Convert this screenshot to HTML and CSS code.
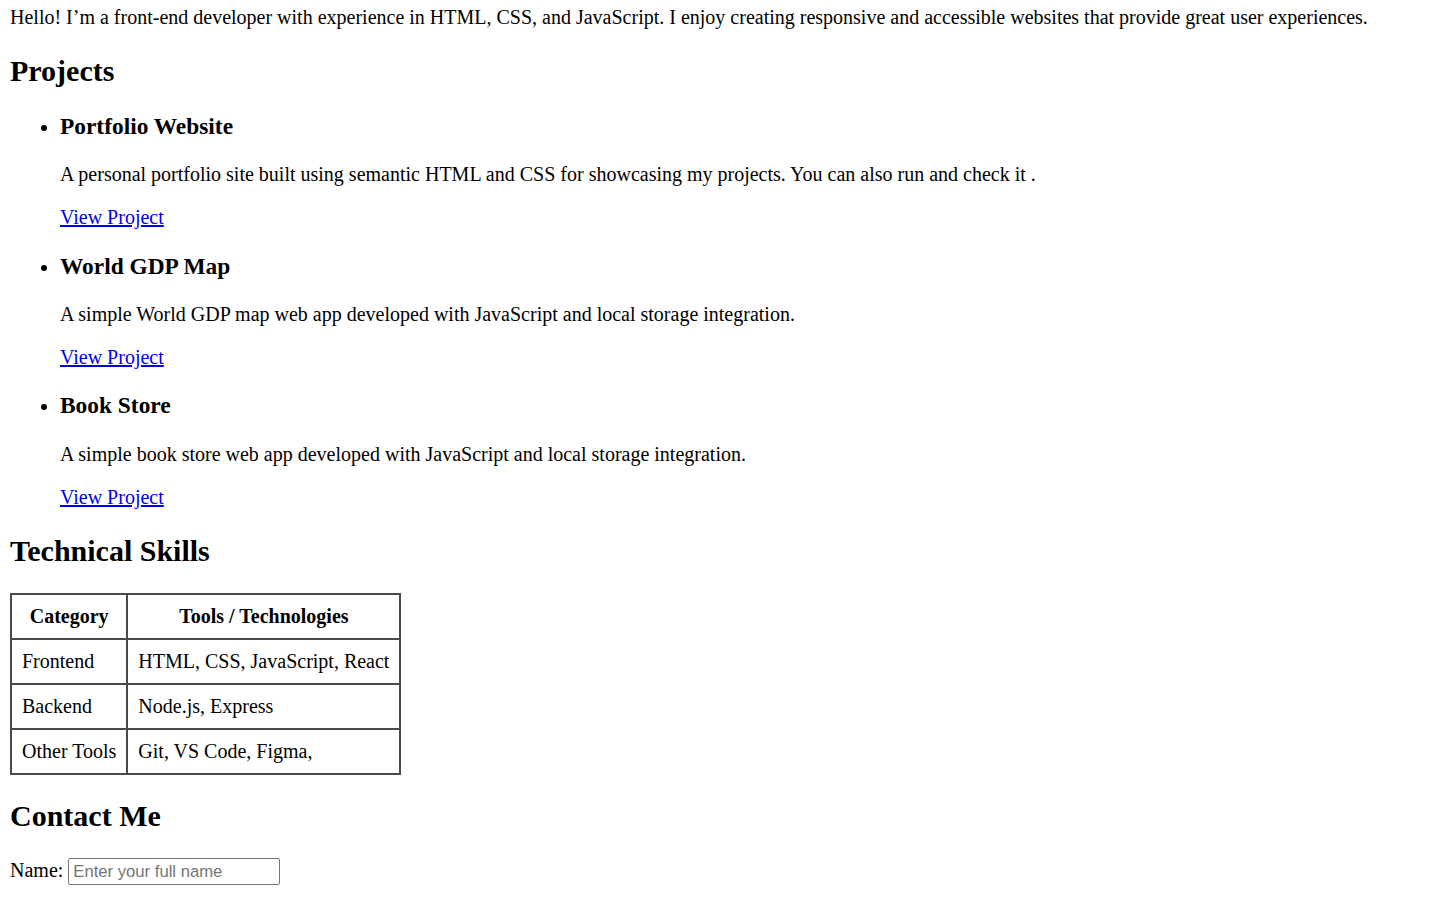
FILE: index.html
```html
<!DOCTYPE html>
<html lang="en">
<head>
<meta charset="utf-8">
<title>Portfolio</title>
<link rel="stylesheet" href="styles.css">
</head>
<body>
<p class="intro">Hello! I’m a front-end developer with experience in HTML, CSS, and JavaScript. I enjoy creating responsive and accessible websites that provide great user experiences.</p>

<section>
  <h2>Projects</h2>
  <ul class="projects">
    <li>
      <h3>Portfolio Website</h3>
      <p>A personal portfolio site built using semantic HTML and CSS for showcasing my projects. You can also run and check it .</p>
      <a href="#">View Project</a>
    </li>
    <li>
      <h3>World GDP Map</h3>
      <p>A simple World GDP map web app developed with JavaScript and local storage integration.</p>
      <a href="#">View Project</a>
    </li>
    <li>
      <h3>Book Store</h3>
      <p>A simple book store web app developed with JavaScript and local storage integration.</p>
      <a href="#">View Project</a>
    </li>
  </ul>
</section>

<section>
  <h2>Technical Skills</h2>
  <table class="skills">
    <thead>
      <tr><th>Category</th><th>Tools / Technologies</th></tr>
    </thead>
    <tbody>
      <tr><td>Frontend</td><td>HTML, CSS, JavaScript, React</td></tr>
      <tr><td>Backend</td><td>Node.js, Express</td></tr>
      <tr><td>Other Tools</td><td>Git, VS Code, Figma,</td></tr>
    </tbody>
  </table>
</section>

<section>
  <h2>Contact Me</h2>
  <form class="contact">
    <label for="name">Name:</label>
    <input id="name" type="text" placeholder="Enter your full name">
  </form>
</section>
</body>
</html>
```
FILE: styles.css
```css
html {
  background: #fff;
}
body {
  margin: 6px 10px 10px;
  font-family: "Liberation Serif", "Times New Roman", serif;
  font-size: 20px;
  color: #000;
}
p {
  margin: 20px 0;
}
.intro {
  margin-top: 0;
}
h2 {
  font-size: 30px;
  font-weight: bold;
  margin: 24.9px 0;
}
h3 {
  font-size: 23.4px;
  font-weight: bold;
  margin: 23.4px 0;
}
.projects {
  margin: 20px 0;
  padding-left: 50px;
}
.projects a {
  color: #0000ee;
  text-decoration: underline;
}
.skills {
  border-collapse: collapse;
  border: 2px solid #4a4a4a;
}
.skills th,
.skills td {
  border: 2px solid #4a4a4a;
  padding: 10px;
  text-align: left;
}
.skills th {
  text-align: center;
  font-weight: bold;
}
.contact {
  margin: 0;
}
.contact input {
  font-family: "Liberation Sans", Arial, sans-serif;
  font-size: 16.67px;
  width: 212px;
  height: 27px;
  box-sizing: border-box;
  border: 1px solid #767676;
  border-radius: 2px;
  padding: 1px 4px;
  margin: 0;
  vertical-align: baseline;
}
.contact input::placeholder {
  color: #757575;
}
```
